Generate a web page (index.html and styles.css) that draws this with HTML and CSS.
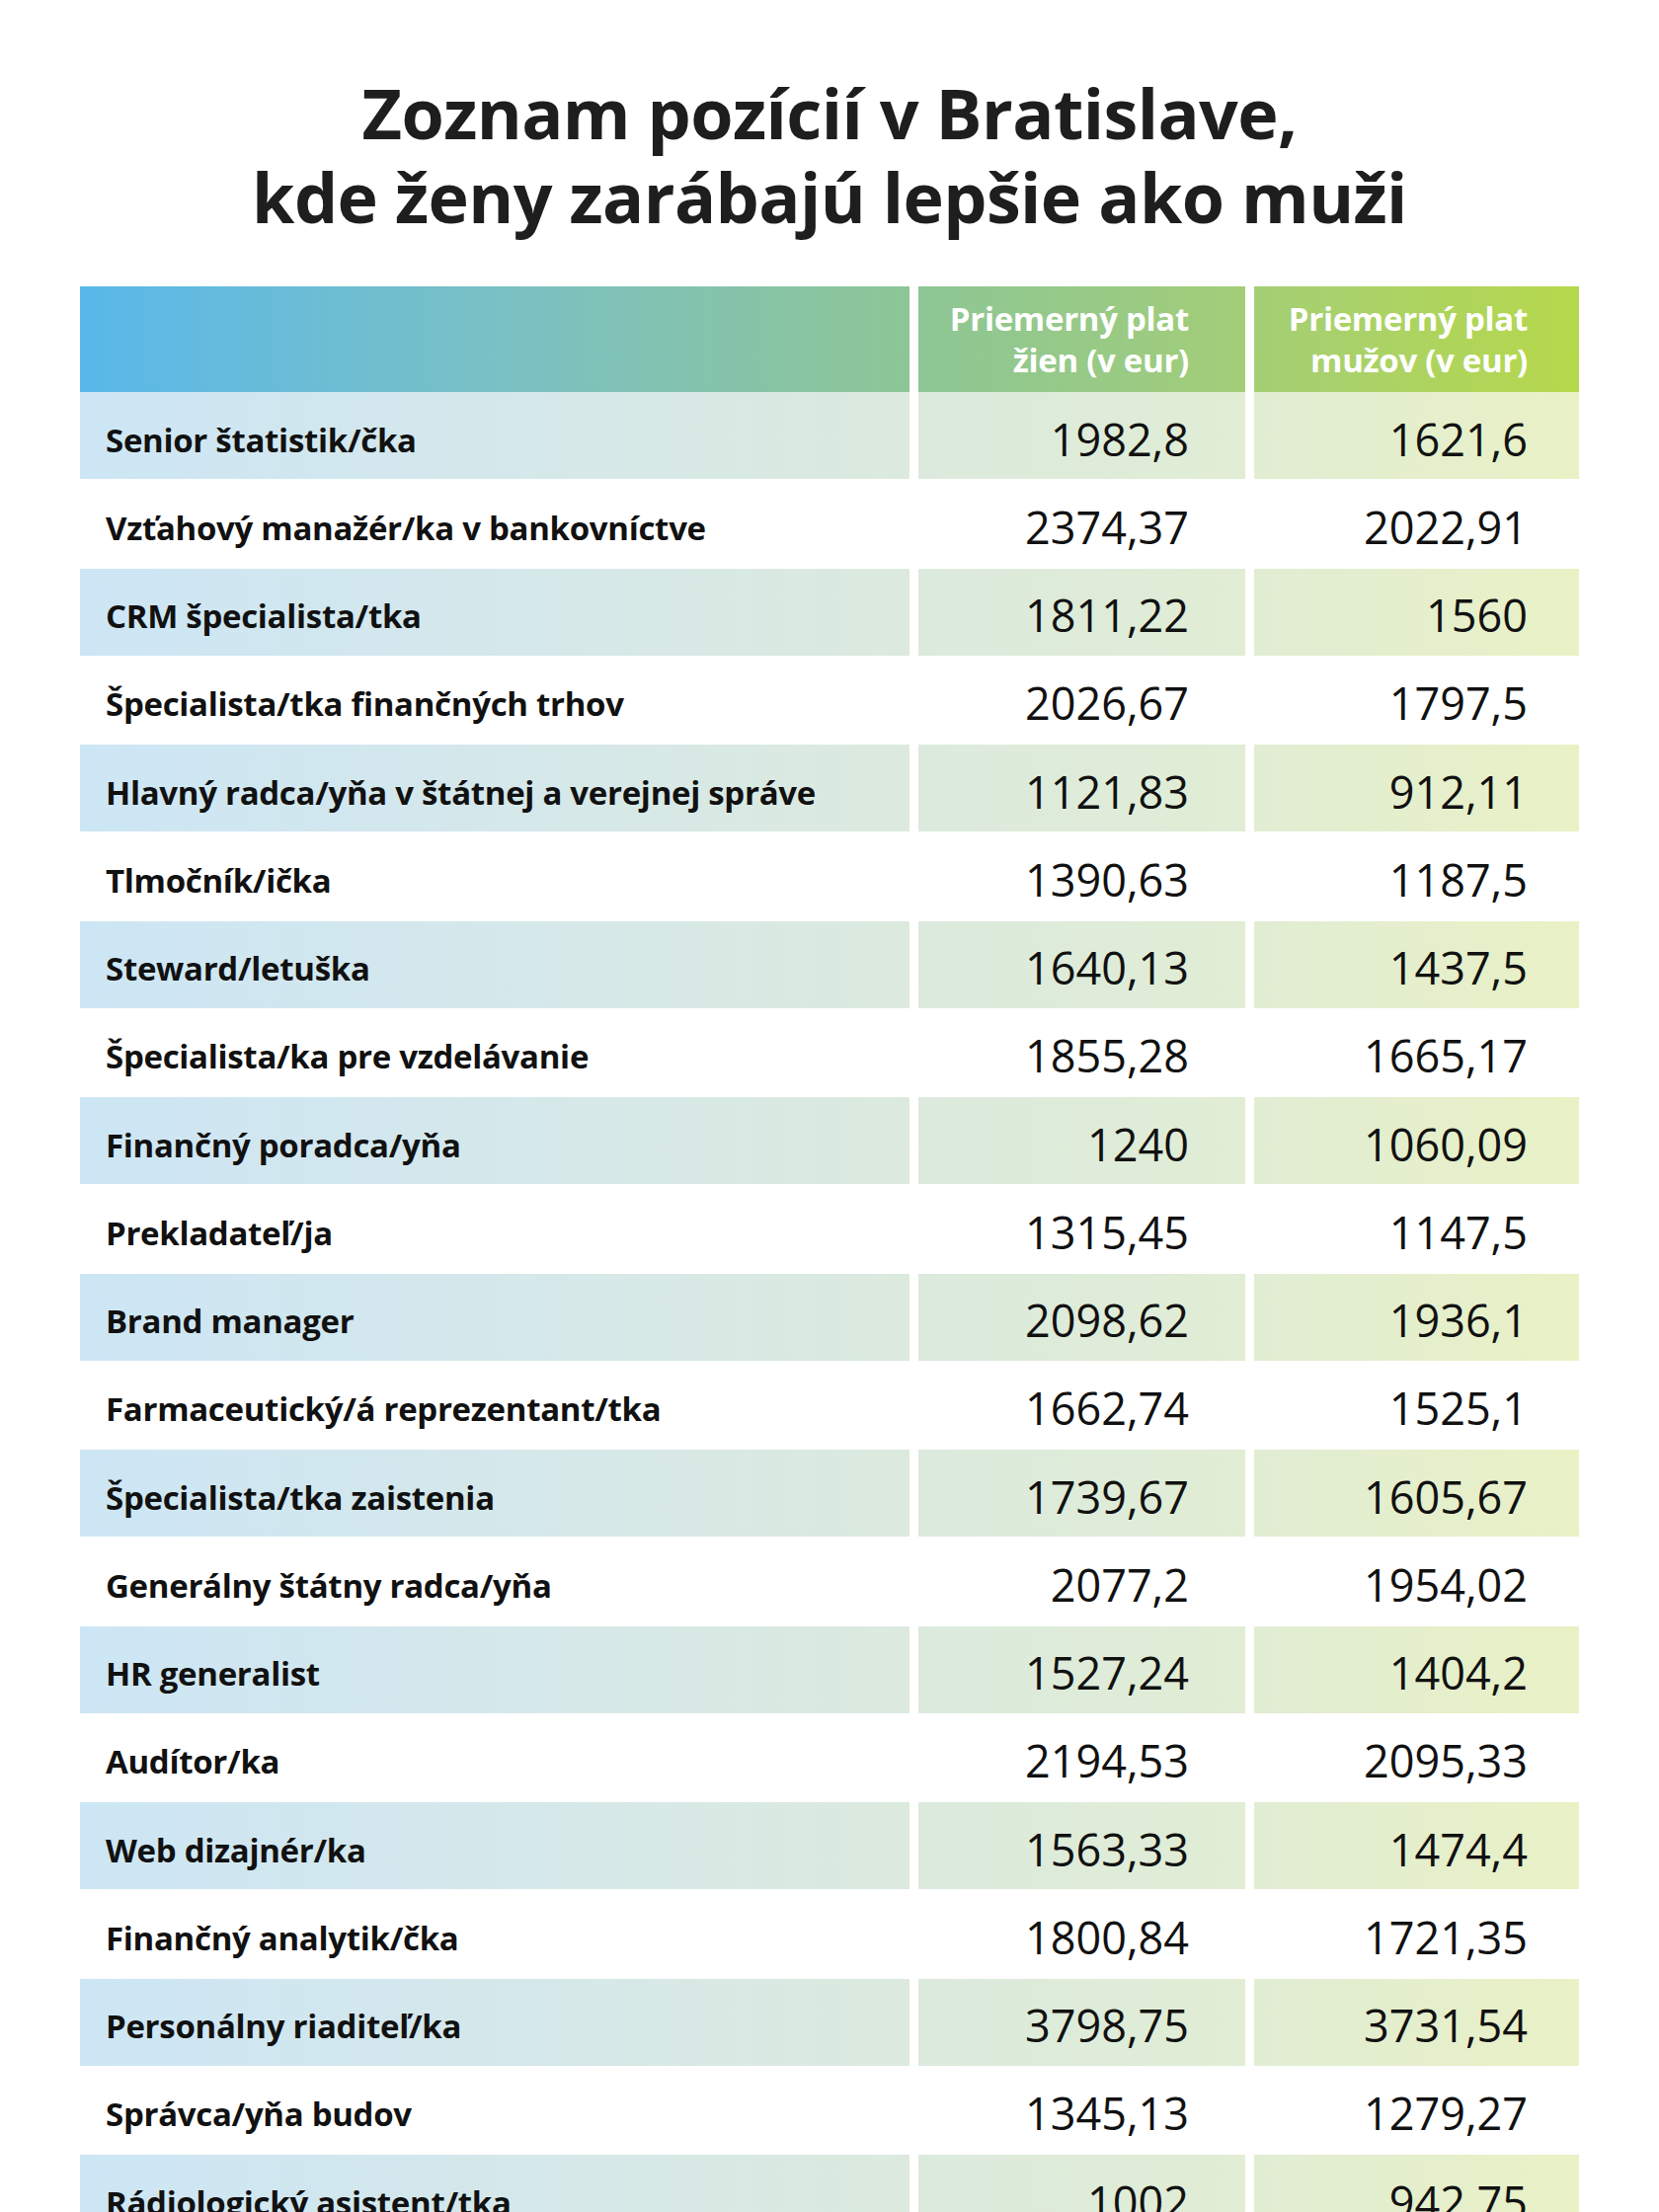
FILE: index.html
```html
<!DOCTYPE html>
<html lang="sk">
<head>
<meta charset="utf-8">
<title>Zoznam pozícií v Bratislave</title>
<link rel="stylesheet" href="styles.css">
</head>
<body>
<main class="page">
  <h1 class="title">Zoznam pozícií v Bratislave,<br>kde ženy zarábajú lepšie ako muži</h1>
  <div class="table">
    <div class="row head">
      <div class="cell c1"></div>
      <div class="cell c2">Priemerný plat<br>žien (v eur)</div>
      <div class="cell c3">Priemerný plat<br>mužov (v eur)</div>
    </div>
    <div class="row band"><div class="cell c1">Senior štatistik/čka</div><div class="cell c2">1982,8</div><div class="cell c3">1621,6</div></div>
    <div class="row"><div class="cell c1">Vzťahový manažér/ka v bankovníctve</div><div class="cell c2">2374,37</div><div class="cell c3">2022,91</div></div>
    <div class="row band"><div class="cell c1">CRM špecialista/tka</div><div class="cell c2">1811,22</div><div class="cell c3">1560</div></div>
    <div class="row"><div class="cell c1">Špecialista/tka finančných trhov</div><div class="cell c2">2026,67</div><div class="cell c3">1797,5</div></div>
    <div class="row band"><div class="cell c1">Hlavný radca/yňa v štátnej a verejnej správe</div><div class="cell c2">1121,83</div><div class="cell c3">912,11</div></div>
    <div class="row"><div class="cell c1">Tlmočník/ička</div><div class="cell c2">1390,63</div><div class="cell c3">1187,5</div></div>
    <div class="row band"><div class="cell c1">Steward/letuška</div><div class="cell c2">1640,13</div><div class="cell c3">1437,5</div></div>
    <div class="row"><div class="cell c1">Špecialista/ka pre vzdelávanie</div><div class="cell c2">1855,28</div><div class="cell c3">1665,17</div></div>
    <div class="row band"><div class="cell c1">Finančný poradca/yňa</div><div class="cell c2">1240</div><div class="cell c3">1060,09</div></div>
    <div class="row"><div class="cell c1">Prekladateľ/ja</div><div class="cell c2">1315,45</div><div class="cell c3">1147,5</div></div>
    <div class="row band"><div class="cell c1">Brand manager</div><div class="cell c2">2098,62</div><div class="cell c3">1936,1</div></div>
    <div class="row"><div class="cell c1">Farmaceutický/á reprezentant/tka</div><div class="cell c2">1662,74</div><div class="cell c3">1525,1</div></div>
    <div class="row band"><div class="cell c1">Špecialista/tka zaistenia</div><div class="cell c2">1739,67</div><div class="cell c3">1605,67</div></div>
    <div class="row"><div class="cell c1">Generálny štátny radca/yňa</div><div class="cell c2">2077,2</div><div class="cell c3">1954,02</div></div>
    <div class="row band"><div class="cell c1">HR generalist</div><div class="cell c2">1527,24</div><div class="cell c3">1404,2</div></div>
    <div class="row"><div class="cell c1">Audítor/ka</div><div class="cell c2">2194,53</div><div class="cell c3">2095,33</div></div>
    <div class="row band"><div class="cell c1">Web dizajnér/ka</div><div class="cell c2">1563,33</div><div class="cell c3">1474,4</div></div>
    <div class="row"><div class="cell c1">Finančný analytik/čka</div><div class="cell c2">1800,84</div><div class="cell c3">1721,35</div></div>
    <div class="row band"><div class="cell c1">Personálny riaditeľ/ka</div><div class="cell c2">3798,75</div><div class="cell c3">3731,54</div></div>
    <div class="row"><div class="cell c1">Správca/yňa budov</div><div class="cell c2">1345,13</div><div class="cell c3">1279,27</div></div>
    <div class="row band"><div class="cell c1">Rádiologický asistent/tka</div><div class="cell c2">1002</div><div class="cell c3">942,75</div></div>
  </div>
</main>
</body>
</html>
```

FILE: styles.css
```css
html, body {
  margin: 0;
  padding: 0;
  background: #ffffff;
}

body {
  font-family: "Open Sans", "Noto Sans", "Liberation Sans", sans-serif;
  color: #111111;
}

.page {
  padding: 72px 81px 40px 81px;
}

.title {
  margin: 0 0 48px 0;
  text-align: center;
  font-family: "Open Sans", "Noto Sans", sans-serif;
  font-weight: 700;
  font-size: 70px;
  line-height: 85px;
  color: #1e1e1e;
  letter-spacing: -0.6px;
}

.table {
  display: flex;
  flex-direction: column;
  row-gap: 1.25px;
  width: 1518px;
}

.row {
  display: grid;
  grid-template-columns: 840px 331px 329px;
  column-gap: 9px;
  height: 88px;
}

.cell {
  display: flex;
  align-items: center;
  box-sizing: border-box;
  background-size: 1518px 100%;
  background-repeat: no-repeat;
  white-space: nowrap;
}

.c1 {
  padding-left: 26px;
  padding-top: 8px;
  font-weight: 700;
  font-size: 33px;
  letter-spacing: -0.3px;
  background-position: 0 0;
}

.c2, .c3 {
  justify-content: flex-end;
  text-align: right;
  padding-top: 6px;
  font-weight: 400;
  font-size: 45px;
  letter-spacing: 0;
}

.c2 {
  padding-right: 57px;
  background-position: -849px 0;
}

.c3 {
  padding-right: 52px;
  background-position: -1189px 0;
}

.head {
  height: 107px;
  margin-bottom: -1.25px;
}

.head .cell {
  background-image: linear-gradient(90deg, #59b8ea 0%, #7cc1c1 30%, #8dc696 55%, #98ca86 68%, #a6cf73 80%, #b6d84b 100%);
  color: #ffffff;
  font-weight: 700;
  font-size: 33px;
  line-height: 42px;
  letter-spacing: -0.3px;
  padding-top: 0;
}

.band .cell {
  background-image: linear-gradient(90deg, #cde6f5 0%, #d5e8ea 30%, #dceade 55%, #dfecd8 70%, #e3eecf 85%, #e9f1c5 100%);
}
```
